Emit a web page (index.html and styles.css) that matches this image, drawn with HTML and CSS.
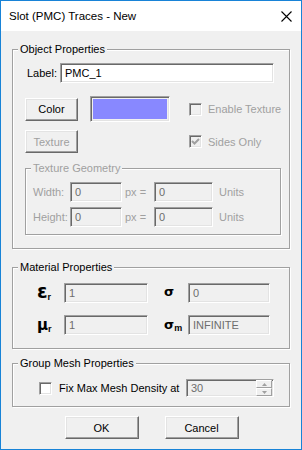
FILE: index.html
```html
<!DOCTYPE html>
<html>
<head>
<meta charset="utf-8">
<link rel="stylesheet" href="styles.css">
</head>
<body>
<div class="window">
  <div class="titlebar">
    <span class="title">Slot (PMC) Traces - New</span>
    <svg class="close" width="11" height="11" viewBox="0 0 11 11"><path d="M0.5 0.5 L10.5 10.5 M10.5 0.5 L0.5 10.5" stroke="#000" stroke-width="1.1" fill="none"/></svg>
  </div>
  <div class="client">
    <div class="group g-object">
      <div class="legend">Object Properties</div>
      <div class="group-body">
        <div class="label-row">
          <span class="lbl">Label:</span>
          <div class="field white w-label">PMC_1</div>
        </div>
        <div class="prop-grid">
          <div class="btn">Color</div>
          <div class="swatch"><span class="swatch-fill"></span></div>
          <div class="check disabled"><span class="box"></span><span>Enable Texture</span></div>
          <div class="btn disabled tex-btn">Texture</div>
          <div class="check disabled tex-check"><span class="box"><svg width="9" height="9" viewBox="0 0 9 9"><path d="M1 4 L3.5 6.5 L8 2" stroke="#a0a0a0" stroke-width="2" fill="none"/></svg></span><span>Sides Only</span></div>
        </div>
        <div class="group g-tex disabled">
          <div class="legend">Texture Geometry</div>
          <div class="geo-grid">
            <span>Width:</span><div class="field w-geo1">0</div><span class="px">px =</span><div class="field w-geo2">0</div><span class="units">Units</span>
            <span>Height:</span><div class="field w-geo1">0</div><span class="px">px =</span><div class="field w-geo2">0</div><span class="units">Units</span>
          </div>
        </div>
      </div>
    </div>

    <div class="group g-mat">
      <div class="legend">Material Properties</div>
      <div class="mat-grid">
        <span class="sym eps">ε<sub>r</sub></span><div class="field w-m1">1</div>
        <span class="sym sig">σ</span><div class="field w-m2">0</div>
        <span class="sym mu">μ<sub>r</sub></span><div class="field w-m1">1</div>
        <span class="sym sig sigm">σ<sub>m</sub></span><div class="field w-m2">INFINITE</div>
      </div>
    </div>

    <div class="group g-mesh">
      <div class="legend">Group Mesh Properties</div>
      <div class="mesh-row">
        <div class="check"><span class="box"></span><span>Fix Max Mesh Density at</span></div>
        <div class="field spin">
          <span>30</span>
          <div class="spin-btns">
            <div class="spin-btn"><svg width="5" height="3" viewBox="0 0 5 3"><path d="M2.5 0 L5 3 L0 3 Z" fill="#a0a0a0"/></svg></div>
            <div class="spin-btn"><svg width="5" height="3" viewBox="0 0 5 3"><path d="M0 0 L5 0 L2.5 3 Z" fill="#a0a0a0"/></svg></div>
          </div>
        </div>
      </div>
    </div>

    <div class="actions">
      <div class="btn act">OK</div>
      <div class="btn act">Cancel</div>
    </div>
  </div>
</div>
</body>
</html>
```
FILE: styles.css
```css
* { box-sizing: border-box; }
html, body { margin: 0; padding: 0; background: #f0f0f0; }
body {
  font-family: "Liberation Sans", Arial, sans-serif;
  font-size: 11px;
  color: #000;
}
.window {
  width: 302px;
  height: 450px;
  border: 1px solid #1883d7;
  background: #f0f0f0;
  display: flex;
  flex-direction: column;
}
.titlebar {
  height: 30px;
  background: #fff;
  display: flex;
  align-items: center;
  padding-left: 8px;
  padding-right: 9px;
  flex: none;
}
.title { flex: 1; font-size: 11.5px; }
.close { display: block; }

.client { padding: 0 11px; }

.group {
  border: 1px solid #a0a0a0;
  box-shadow: inset 1px 1px 0 #fff, 1px 1px 0 #fff;
}
.legend {
  display: table;
  margin: -8px 0 0 5px;
  padding: 0 2px;
  line-height: 14px;
  height: 14px;
  background: #f0f0f0;
}
.disabled, .disabled .legend { color: #a0a0a0; }

.g-object { margin-top: 18px; padding-bottom: 13px; }
.group-body { padding-left: 12px; }

.label-row { display: flex; align-items: center; margin-top: 7px; height: 20px; }
.lbl { width: 35px; padding-left: 2px; }

.field {
  height: 20px;
  border-style: solid;
  border-width: 1px;
  border-color: #a0a0a0 #fff #fff #a0a0a0;
  box-shadow: inset 1px 1px 0 #696969, inset -1px -1px 0 #e3e3e3;
  background: #f0f0f0;
  color: #6d6d6d;
  padding: 0 0 0 4px;
  display: flex;
  align-items: center;
  line-height: 14px;
}
.field.white { background: #fff; color: #000; }
.w-label { width: 214px; }

.prop-grid {
  display: grid;
  grid-template-columns: 53px 80px auto;
  column-gap: 12px;
  align-items: center;
  margin-top: 13px;
}
.btn {
  height: 23px;
  border-style: solid;
  border-width: 1px;
  border-color: #fff #696969 #696969 #fff;
  box-shadow: inset -1px -1px 0 #a0a0a0, inset 1px 1px 0 #e3e3e3;
  background: #f0f0f0;
  display: flex;
  align-items: center;
  justify-content: center;
}
.swatch {
  height: 26px;
  width: 80px;
  border-style: solid;
  border-width: 1px;
  border-color: #a0a0a0 #fff #fff #a0a0a0;
  box-shadow: inset 1px 1px 0 #696969, inset -1px -1px 0 #e3e3e3;
  padding: 2px;
  display: flex;
}
.swatch-fill { flex: 1; background: #8888ff; }
.check { display: flex; align-items: center; gap: 6px; white-space: nowrap; }
.prop-grid .check { margin-left: 7px; }
.box {
  width: 13px;
  height: 13px;
  border-style: solid;
  border-width: 1px;
  border-color: #a0a0a0 #fff #fff #a0a0a0;
  box-shadow: inset 1px 1px 0 #696969, inset -1px -1px 0 #e3e3e3;
  background: #fff;
  display: flex;
  align-items: center;
  justify-content: center;
  flex: none;
}
.disabled .box { background: #f0f0f0; }
.tex-btn { margin-top: 8px; }
.tex-check { margin-top: 8px; grid-column: 3; }

.g-tex { width: 256px; margin-top: 15px; padding: 0 0 7px 0; }
.geo-grid {
  display: grid;
  grid-template-columns: 37px 52px 32px 59px auto;
  grid-auto-rows: 20px;
  row-gap: 5px;
  align-items: center;
  margin-top: 7px;
  padding-left: 7px;
}
.px { padding-left: 3px; }
.units { padding-left: 6px; }
.w-geo1 { width: 52px; }
.w-geo2 { width: 59px; }

.g-mat { margin-top: 18px; padding: 0 0 13px 0; }
.mat-grid {
  display: grid;
  grid-template-columns: 27px 84px 40px 82px;
  grid-auto-rows: 20px;
  row-gap: 12px;
  align-items: center;
  margin-top: 9px;
  padding-left: 24px;
}
.mat-grid .sig { margin-left: 16px; }
.sym {
  font-family: "DejaVu Sans", sans-serif;
  font-weight: bold;
  font-size: 15px;
  line-height: 20px;
  white-space: nowrap;
}
.eps { font-size: 19px; margin-top: -5px; }
.sym.sig { font-size: 13px; margin-top: -3px; }
.sym.sigm { margin-top: 0; }
.sym sub {
  font-family: "Liberation Sans", sans-serif;
  font-weight: bold;
  font-size: 9px;
  vertical-align: -2px;
  line-height: 0;
}

.g-mesh { margin-top: 14px; padding: 0 0 9px 0; }
.mesh-row { display: flex; align-items: center; margin-top: 9px; height: 18px; padding-left: 26px; }
.mesh-row .check { gap: 7px; width: 147px; }
.spin { width: 88px; height: 18px; justify-content: space-between; padding-right: 1px; }
.spin-btns { display: flex; flex-direction: column; width: 16px; height: 16px; }
.spin-btn {
  flex: 1;
  border-style: solid;
  border-width: 1px;
  border-color: #fff #a0a0a0 #a0a0a0 #fff;
  background: #f0f0f0;
  display: flex;
  align-items: center;
  justify-content: center;
}

.actions {
  display: flex;
  justify-content: center;
  gap: 26px;
  margin-top: 9px;
  padding-left: 1px;
}
.act { width: 74px; height: 23px; }
```
